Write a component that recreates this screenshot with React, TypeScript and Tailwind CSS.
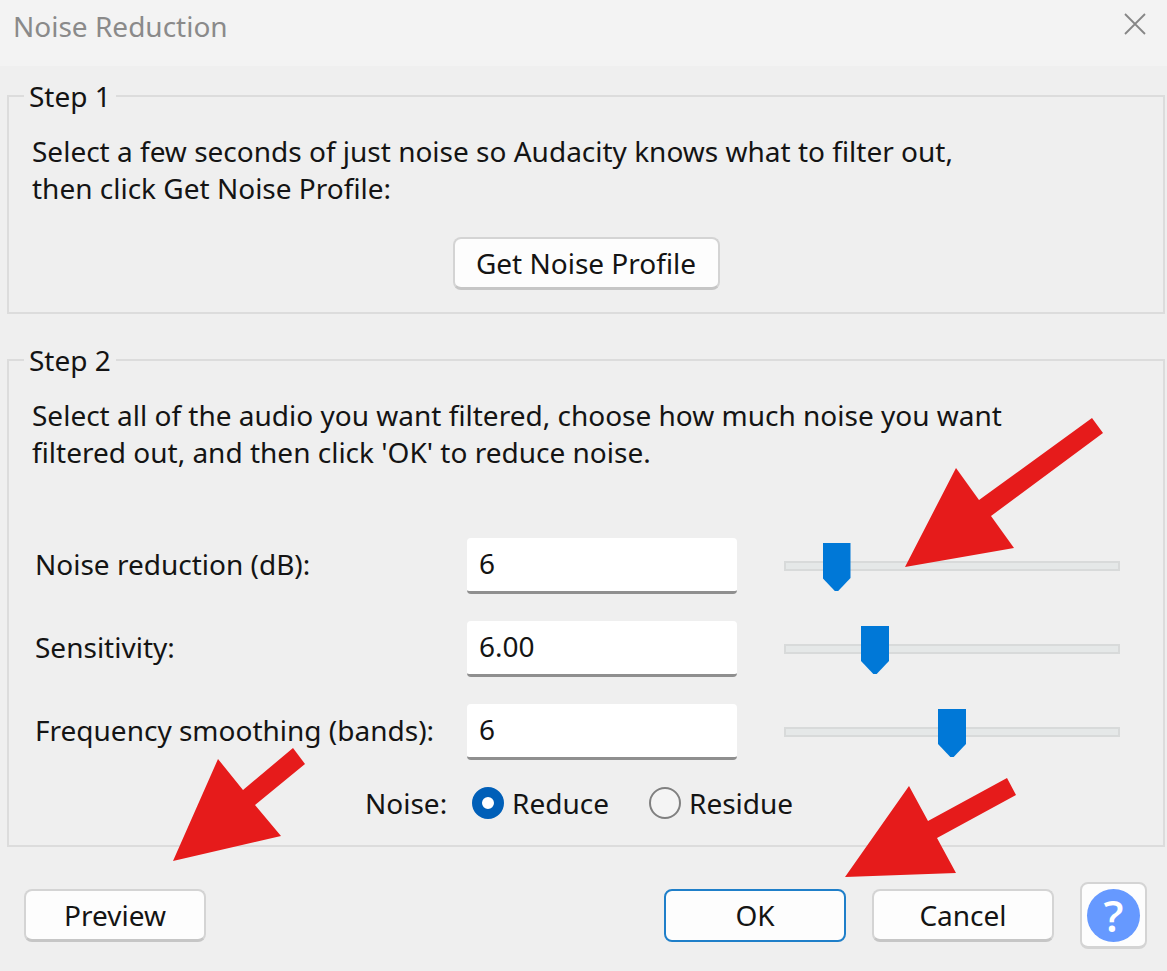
import { useState } from "react";

const sliders = [
  { id: "reduction", label: "Noise reduction (dB):", max: 48, step: 1, digits: 0, arrow: true },
  { id: "sensitivity", label: "Sensitivity:", max: 24, step: 0.01, digits: 2, arrow: false },
  { id: "smoothing", label: "Frequency smoothing (bands):", max: 12, step: 1, digits: 0, arrow: false },
];

const button =
  "h-[53px] rounded-lg border-2 border-b-[3px] border-[#d4d4d4] border-b-[#c6c6c6] bg-[#fdfdfd] text-center";

const SliderRow = ({ row }: { row: (typeof sliders)[number] }) => {
  const [value, setValue] = useState(6);

  return (
    <div className="flex items-center">
      <label htmlFor={row.id} className="w-[432px] shrink-0 pb-1">{row.label}</label>
      <input
        id={row.id}
        type="text"
        value={value.toFixed(row.digits)}
        onChange={(e) => setValue(Number(e.target.value) || 0)}
        className="h-14 w-[270px] shrink-0 rounded-sm border-b-[3px] border-[#8f8f8f] bg-white px-3 pb-1 outline-none"
      />
      <div className="relative ml-[47px] flex flex-1 items-center">
        <input
          type="range"
          aria-label={row.label}
          min={0}
          max={row.max}
          step={row.step}
          value={value}
          onChange={(e) => setValue(Number(e.target.value))}
          className="h-14 w-full appearance-none bg-transparent [&::-webkit-slider-runnable-track]:h-[10px] [&::-webkit-slider-runnable-track]:bg-[#e5e8e8] [&::-webkit-slider-runnable-track]:shadow-[inset_0_0_0_2px_#d8dada] [&::-webkit-slider-thumb]:-mt-[18px] [&::-webkit-slider-thumb]:h-12 [&::-webkit-slider-thumb]:w-7 [&::-webkit-slider-thumb]:appearance-none [&::-webkit-slider-thumb]:bg-[#0078d7] [&::-webkit-slider-thumb]:[clip-path:polygon(0_0,100%_0,100%_73%,56%_100%,44%_100%,0_73%)]"
        />
        {row.arrow && (
          <svg className="pointer-events-none absolute -top-[120px] left-[121px]" width="198" height="149" viewBox="0 0 198 149" fill="#e61b1b">
            <path d="M0 149 51 50 74 82 187 0 198 15 86 98 109 130Z" />
          </svg>
        )}
      </div>
    </div>
  );
};

const Radio = ({ label, checked, onChange }: { label: string; checked: boolean; onChange: () => void }) => (
  <label className="flex items-center gap-2">
    <input
      type="radio"
      name="noise"
      checked={checked}
      onChange={onChange}
      className="size-8 appearance-none rounded-full border-2 border-[#808080] bg-[#f4f4f4] checked:border-[10px] checked:border-[#005fb8] checked:bg-white"
    />
    <span>{label}</span>
  </label>
);

export default function App() {
  const [mode, setMode] = useState("Reduce");

  return (
    <div className="flex min-h-screen flex-col bg-[#efefef] font-['Noto_Sans','Open_Sans',sans-serif] text-[28px] leading-[37px] text-[#141414]">
      {/* title bar */}
      <header className="flex h-[66px] items-start justify-between bg-[#f3f3f3] pt-2 pr-5 pl-[13px]">
        <h1 className="text-[#8a8a8a]">Noise Reduction</h1>
        <button type="button" aria-label="Close" className="p-[1px] pt-[5px]">
          <svg width="22" height="22" viewBox="0 0 22 22" fill="none" stroke="#868686" strokeWidth="1.8">
            <path d="M1 1 21 21M21 1 1 21" />
          </svg>
        </button>
      </header>

      <main className="flex flex-col pt-[10px] pr-[2px] pl-[7px]">
        <fieldset className="border-2 border-[#dcdcdc] px-[23px] pt-[17px] pb-[22px]">
          <legend className="-ml-2 h-10 px-[5px] pt-[2px]">Step 1</legend>
          <p>
            Select a few seconds of just noise so Audacity knows what to filter out,
            <br />
            then click Get Noise Profile:
          </p>
          <div className="mt-[30px] flex justify-center">
            <button type="button" className={`${button} w-[267px]`}>Get Noise Profile</button>
          </div>
        </fieldset>

        <fieldset className="mt-[26px] border-2 border-[#dcdcdc] px-[23px] pt-[17px] pb-[22px]">
          <legend className="-ml-2 h-10 px-[5px] pt-[2px]">Step 2</legend>
          <p>
            Select all of the audio you want filtered, choose how much noise you want
            <br />
            filtered out, and then click 'OK' to reduce noise.
          </p>
          <div className="mt-[67px] flex flex-col gap-[27px] pr-5 pl-[3px]">
            {sliders.map((row) => (
              <SliderRow key={row.id} row={row} />
            ))}
          </div>
          <div className="mt-[23px] flex h-10 items-center pl-[333px]">
            <span className="w-[107px]">Noise:</span>
            <div className="flex gap-10">
              <Radio label="Reduce" checked={mode === "Reduce"} onChange={() => setMode("Reduce")} />
              <Radio label="Residue" checked={mode === "Residue"} onChange={() => setMode("Residue")} />
            </div>
          </div>
        </fieldset>
      </main>

      <footer className="flex items-center gap-[26px] pt-[35px] pr-5 pb-[21px] pl-6">
        <div className="relative mr-auto">
          <button type="button" className={`${button} w-[182px]`}>Preview</button>
          <svg className="pointer-events-none absolute -top-[141px] left-[149px]" width="132" height="113" viewBox="0 0 132 113" fill="#e61b1b">
            <path d="M0 113 45 11 70 42 120 0 132 16 82 57 108 88Z" />
          </svg>
        </div>
        <div className="relative">
          <button type="button" className="h-[53px] w-[182px] rounded-lg border-2 border-[#1f7fc9] bg-[#fdfdfd]">OK</button>
          <svg className="pointer-events-none absolute -top-[111px] left-[181px]" width="171" height="99" viewBox="0 0 171 99" fill="#e61b1b">
            <path d="M0 99 64 8 83 43 162 0 171 17 92 60 111 95Z" />
          </svg>
        </div>
        <button type="button" className={`${button} w-[182px]`}>Cancel</button>
        <button type="button" aria-label="Help" className="flex size-[67px] items-center justify-center rounded-lg border-2 border-b-[3px] border-[#d4d4d4] bg-[#fdfdfd]">
          <span className="flex size-[53px] items-center justify-center rounded-full bg-[#6699ff] font-['Open_Sans',sans-serif] text-[44px] font-semibold text-white">?</span>
        </button>
      </footer>
    </div>
  );
}
